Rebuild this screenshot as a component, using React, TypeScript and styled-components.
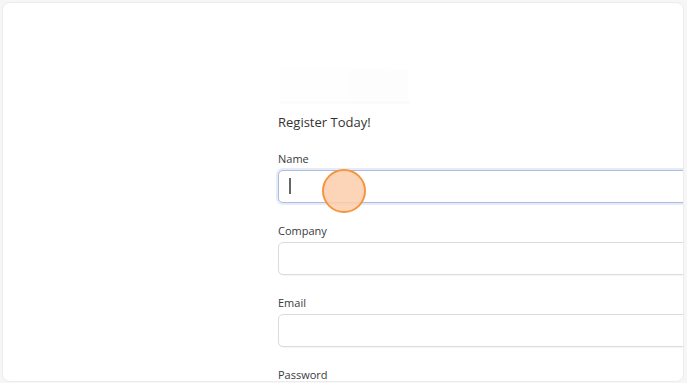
import React from "react";
import styled, { createGlobalStyle } from "styled-components";

const Global = createGlobalStyle`
  html, body { margin: 0; padding: 0; background: #f6f6f6; }
  body { font-family: "Open Sans", "Liberation Sans", sans-serif; }
  #root { height: 383px; overflow: hidden; }
`;

const Page = styled.div`
  height: 383px;
  padding: 2px 3px 1px 2px;
  box-sizing: border-box;
`;

const Card = styled.div`
  position: relative;
  height: 100%;
  background: #ffffff;
  border: 1px solid #ececec;
  border-radius: 8px;
  overflow: hidden;
  box-sizing: border-box;
`;

const Column = styled.div`
  display: flex;
  flex-direction: column;
  margin-left: 275px;
  padding-top: 64px;
  width: 470px;
`;

const LogoMark = styled.svg`
  display: block;
  width: 135px;
  height: 38px;
  margin-bottom: 8px;
`;

const Heading = styled.div`
  font-size: 13px;
  line-height: 18px;
  color: #333333;
  margin-bottom: 20px;
`;

const Field = styled.div`
  display: flex;
  flex-direction: column;
  gap: 4px;
  margin-bottom: 20px;
`;

const Label = styled.label`
  font-size: 11px;
  line-height: 15px;
  font-weight: 500;
  color: #3a3a3a;
`;

const InputBox = styled.div<{ $focused?: boolean }>`
  position: relative;
  height: 33px;
  box-sizing: border-box;
  border-radius: 5px;
  background: #ffffff;
  border: 1px solid ${(p) => (p.$focused ? "#aebbe0" : "#dcdcdc")};
  box-shadow: ${(p) =>
    p.$focused ? "0 0 0 2px #e6ebf7" : "0 1px 1px rgba(0,0,0,0.04)"};
`;

const Caret = styled.span`
  position: absolute;
  left: 10px;
  top: 7px;
  width: 1.5px;
  height: 16px;
  background: #666666;
`;

const ClickMarker = styled.div`
  position: absolute;
  left: 319px;
  top: 166px;
  width: 44px;
  height: 44px;
  box-sizing: border-box;
  border-radius: 50%;
  border: 2px solid #f6953f;
  background: rgba(252, 205, 170, 0.85);
`;

const fields = ["Name", "Company", "Email", "Password"];

export default function App() {
  return (
    <>
      <Global />
      <Page>
        <Card>
          <Column>
            <LogoMark viewBox="0 0 135 38">
              <rect x="2" y="1" width="110" height="32" fill="#fefefe" />
              <rect x="70" y="3" width="60" height="30" fill="#fdfdfd" />
              <rect x="2" y="34" width="130" height="3" fill="#fbfbfc" />
            </LogoMark>
            <Heading>Register Today!</Heading>
            {fields.map((f, i) => (
              <Field key={f}>
                <Label>{f}</Label>
                <InputBox $focused={i === 0}>{i === 0 && <Caret />}</InputBox>
              </Field>
            ))}
          </Column>
          <ClickMarker />
        </Card>
      </Page>
    </>
  );
}
